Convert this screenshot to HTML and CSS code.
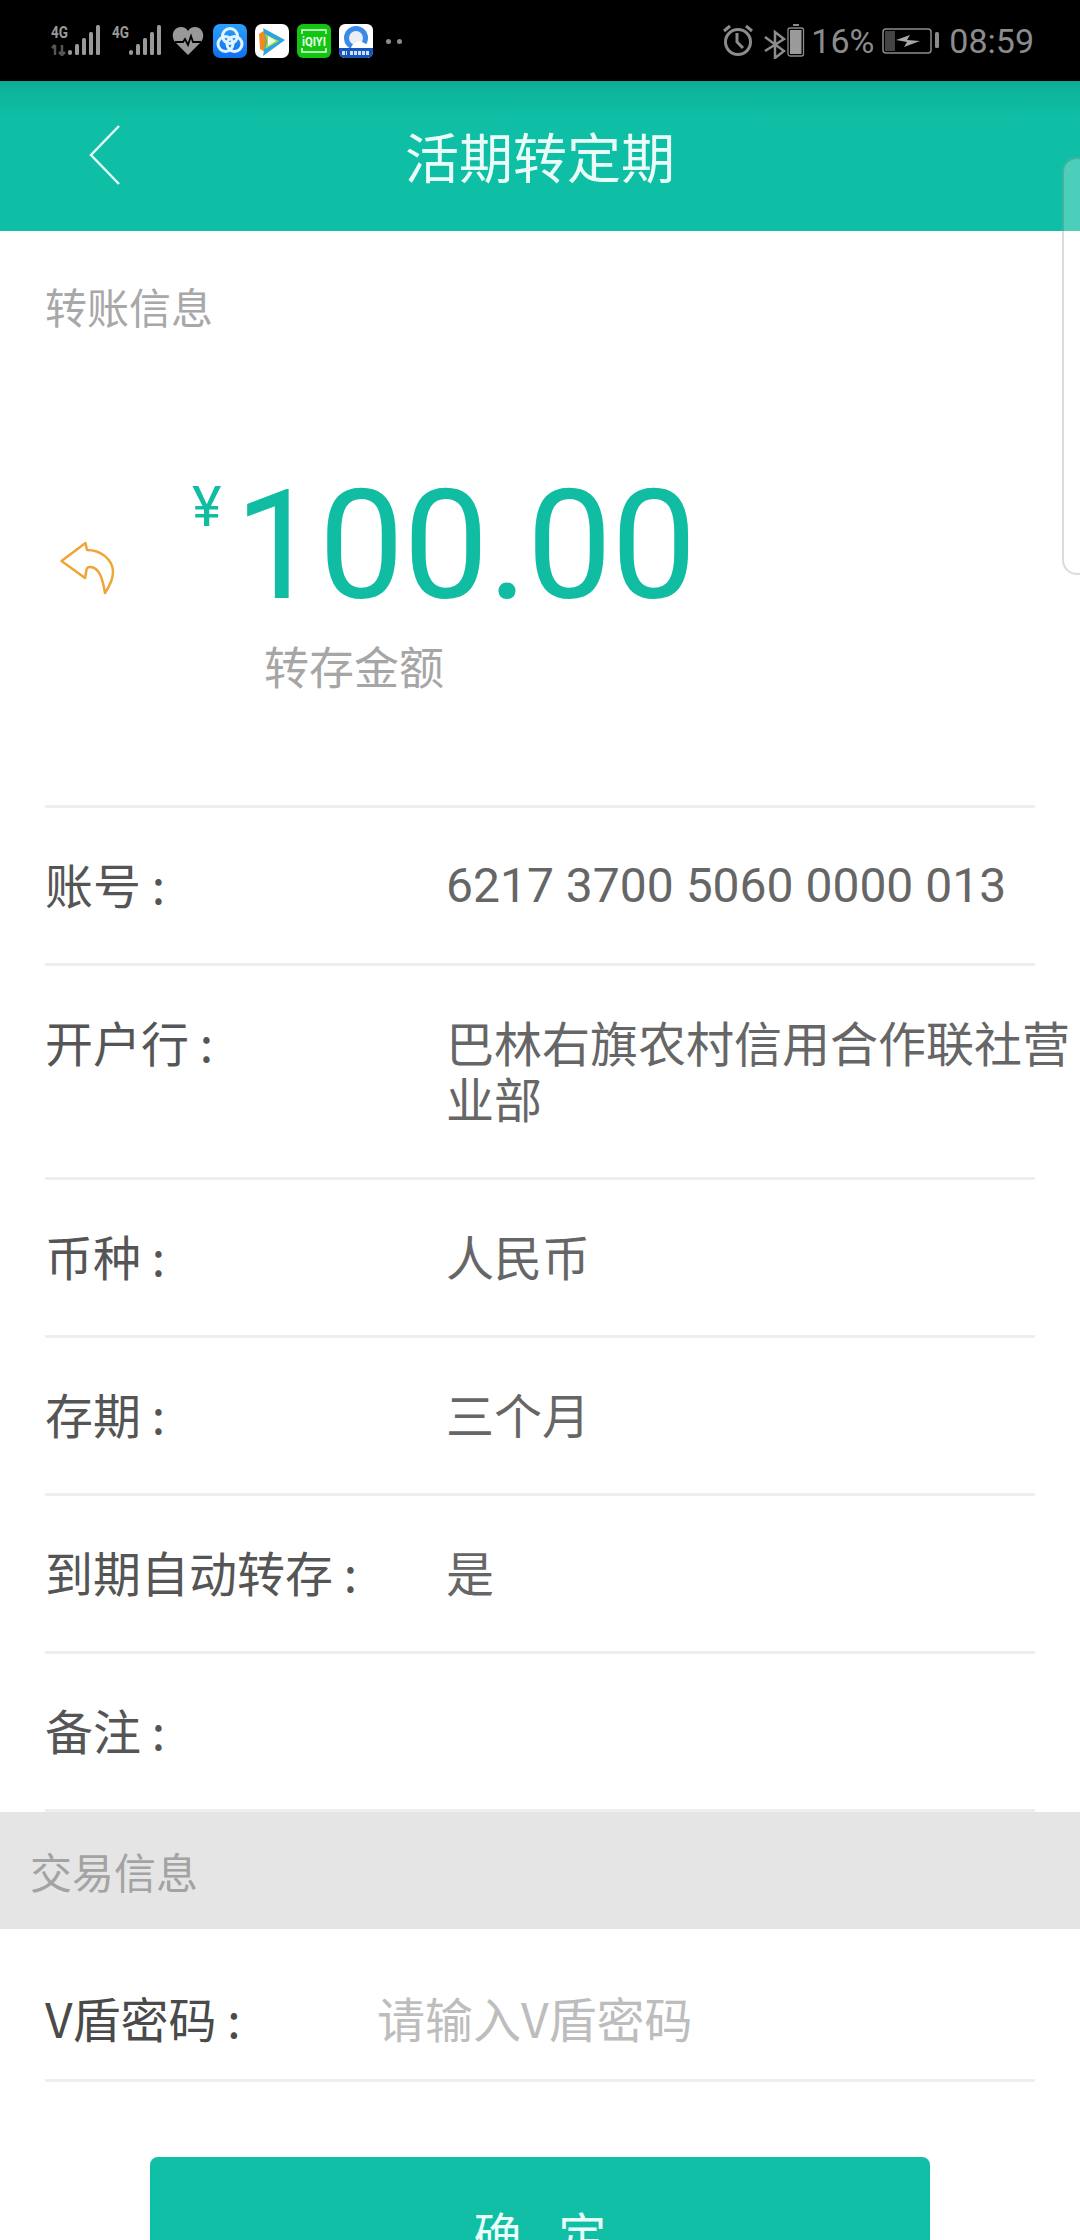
FILE: index.html
```html
<!DOCTYPE html>
<html lang="zh-CN">
<head>
<meta charset="utf-8">
<title>活期转定期</title>
<link rel="stylesheet" href="styles.css">
</head>
<body>
<div class="screen">
  <div class="status">
    <div class="status-left">
      <svg class="sig" width="50" height="36" viewBox="0 -4 50 36">
        <text x="1" y="14" class="sig-t" textLength="17" lengthAdjust="spacingAndGlyphs">4G</text>
        <path d="M5 21v10M2 24l3-3M12 21v10M9 28l3 3 3-3" stroke="#555" stroke-width="2.500" fill="none"/>
        <rect x="18" y="26" width="4" height="5" rx="2" fill="#999"/><rect x="25" y="20" width="4" height="11" rx="1.500" fill="#999"/><rect x="32" y="14" width="4" height="17" rx="1.500" fill="#999"/><rect x="39" y="8" width="4" height="23" rx="1.500" fill="#999"/><rect x="46" y="1" width="4" height="30" rx="1.500" fill="#999"/>
      </svg>
      <svg class="sig" width="50" height="36" viewBox="0 -4 50 36">
        <text x="1" y="14" class="sig-t" textLength="17" lengthAdjust="spacingAndGlyphs">4G</text>
        <rect x="18" y="26" width="4" height="5" rx="2" fill="#999"/><rect x="25" y="20" width="4" height="11" rx="1.500" fill="#999"/><rect x="32" y="14" width="4" height="17" rx="1.500" fill="#999"/><rect x="39" y="8" width="4" height="23" rx="1.500" fill="#999"/><rect x="46" y="1" width="4" height="30" rx="1.500" fill="#999"/>
      </svg>
      <svg class="heart" width="32" height="28" viewBox="0 0 32 28">
        <path d="M16 28 3 15C-2 8 2 0 9 0c3 0 5.500 1.500 7 4 1.500-2.500 4-4 7-4 7 0 11 8 6 15z" fill="#999"/>
        <path d="M3 15h8l2-3 3 6 3-9 2 6h8" stroke="#000" stroke-width="1.800" fill="none"/>
      </svg>
      <svg class="app" width="34" height="34" viewBox="0 0 34 34">
        <defs><linearGradient id="blueg" x1="0" y1="0" x2="0" y2="1"><stop offset="0" stop-color="#2aa0fa"/><stop offset="1" stop-color="#0f6fee"/></linearGradient></defs>
        <rect width="34" height="34" rx="7" fill="url(#blueg)"/>
        <g fill="none" stroke="#e4f4ff" stroke-width="3"><circle cx="17" cy="12" r="7.500"/><circle cx="12.500" cy="20" r="7.500"/><circle cx="21.500" cy="20" r="7.500"/></g>
      </svg>
      <svg class="app" width="34" height="34" viewBox="0 0 34 34">
        <rect width="34" height="34" rx="7" fill="#fff"/>
        <path d="M4 10 10 6 16 17 10 28 5 25z" fill="#f08a1d"/>
        <path d="M8 4 30 16 8 32l3-16z" fill="#2aa4e2"/>
        <path d="M10 10 24 17 10 25l2-8z" fill="#a6d846"/>
        <path d="M13 12 21 17 13 22z" fill="#f4ffe8"/>
      </svg>
      <svg class="app" width="34" height="34" viewBox="0 0 34 34">
        <rect width="34" height="34" rx="6" fill="#11c511"/>
        <path d="M5 10V6h24v4M5 24v4h24v-4" stroke="#e6ffe6" stroke-width="1.500" fill="none"/>
        <text x="5" y="22" class="iq" textLength="24" lengthAdjust="spacingAndGlyphs">iQIYI</text>
      </svg>
      <svg class="app" width="34" height="34" viewBox="0 0 34 34">
        <rect width="34" height="34" rx="6" fill="#fff"/>
        <circle cx="17" cy="14" r="9.500" fill="#e9eef4" stroke="#3a8ae8" stroke-width="5"/>
        <path d="M12 24c2-6 8-8 13-5 3 1 6 3 7 5z" fill="#fff"/>
        <path d="M0 24h34v4a6 6 0 0 1-6 6H6a6 6 0 0 1-6-6z" fill="#1656bc"/>
        <path d="M3 29h5M11 29h20" stroke="#cfe0ff" stroke-width="4" stroke-dasharray="3 1"/>
      </svg>
      <span class="dots"><i class="dot"></i><i class="dot"></i></span>
    </div>
    <div class="status-right">
      <svg width="32" height="32" viewBox="0 0 32 32" class="alarm">
        <circle cx="16" cy="18" r="12.500" fill="none" stroke="#8c8c8c" stroke-width="3"/>
        <path d="M15 9v9l6 6M2 7l6-5M30 7l-6-5" fill="none" stroke="#8c8c8c" stroke-width="3"/>
      </svg>
      <svg width="22" height="32" viewBox="0 0 22 32" class="bt">
        <path d="M1 10 20 24 11 31V5l9 7L1 24" fill="none" stroke="#8c8c8c" stroke-width="2.500"/>
      </svg>
      <svg width="18" height="33" viewBox="0 0 18 33" class="bat">
        <rect x="6" y="0" width="6" height="2" fill="#8c8c8c"/>
        <rect x="1" y="4" width="15.500" height="28" rx="2" fill="none" stroke="#8c8c8c" stroke-width="1.300"/>
        <rect x="3" y="6" width="11.500" height="24" fill="#9a9a9a"/>
      </svg>
      <span class="st-text pct">16%</span>
      <svg width="58" height="26" viewBox="0 0 58 26" class="chg">
        <rect x="1" y="1" width="48" height="24" rx="3" fill="none" stroke="#8c8c8c" stroke-width="1.500"/>
        <rect x="3" y="3" width="10" height="20" fill="#444"/>
        <path d="M14 12 28 7l-3 5 13 1-16 6 3-5z" fill="#a8a8a8"/>
        <rect x="53" y="4" width="4" height="16" rx="1.500" fill="#8c8c8c"/>
      </svg>
      <span class="st-text time">08:59</span>
    </div>
  </div>

  <header class="nav">
    <svg class="back" width="32" height="64" viewBox="0 0 32 64">
      <path d="M30 3 2 32l28 29" fill="none" stroke="#e6fbf7" stroke-width="2.500"/>
    </svg>
    <h1 class="title">活期转定期</h1>
  </header>

  <main class="content">
    <div class="section-label">转账信息</div>

    <section class="hero">
      <svg class="reply" width="56" height="56" viewBox="0 0 56 56">
        <path d="M1.500 20 25.500 2 27 9C40 9 53 18 53 31 53 38 49 46 45 52 43 40 40 26 30 26 28 26 27 27 26.700 28L25 37Z" fill="none" stroke="#efa535" stroke-width="2.500" stroke-linejoin="round"/>
      </svg>
      <div class="amount-col">
        <div class="amount"><span class="yen">¥</span><span class="num">100.00</span></div>
        <div class="amount-cap">转存金额</div>
      </div>
    </section>

    <div class="rows">
      <div class="row"><div class="k">账号 :</div><div class="v num-v">6217 3700 5060 0000 013</div></div>
      <div class="row"><div class="k">开户行 :</div><div class="v">巴林右旗农村信用合作联社营业部</div></div>
      <div class="row"><div class="k">币种 :</div><div class="v">人民币</div></div>
      <div class="row"><div class="k">存期 :</div><div class="v">三个月</div></div>
      <div class="row"><div class="k">到期自动转存 :</div><div class="v">是</div></div>
      <div class="row"><div class="k">备注 :</div><div class="v"></div></div>
    </div>

    <div class="band">交易信息</div>

    <div class="row pw-row">
      <div class="k pw-k">V盾密码 :</div>
      <div class="ph">请输入V盾密码</div>
    </div>

    <div class="btn-wrap"><button class="btn">确 定</button></div>
  </main>

  <div class="scroll-tab"></div>
</div>
</body>
</html>
```

FILE: styles.css
```css
* { box-sizing: border-box; }
html, body { margin: 0; padding: 0; }
body {
  width: 1080px;
  height: 2240px;
  overflow: hidden;
  background: #fff;
  font-family: "Roboto", "Noto Sans CJK SC", sans-serif;
  color: #555;
}
.screen { position: relative; width: 1080px; height: 2240px; overflow: hidden; }

.status {
  height: 81px;
  background: #000;
  display: flex;
  justify-content: space-between;
  align-items: flex-start;
  padding: 24px 46px 0 50px;
}
.status-left { display: flex; align-items: flex-start; gap: 8px; }
.status-right { display: flex; align-items: flex-start; }
.sig { display: block; margin: -4px 3px 0 0; }
.sig-t { font: 700 17px "Roboto", sans-serif; fill: #999; }
.heart { margin: 3px 1px 0 0; }
.iq { font: 700 12px "Roboto", sans-serif; fill: #eaffea; }
.dots { display: flex; gap: 6px; margin: 15px 0 0 5px; }
.dot { width: 5px; height: 5px; border-radius: 50%; background: #8c8c8c; display: block; }
.alarm { margin-right: 10px; }
.bt { margin: 3px 1px 0 0; }
.bat { margin-right: 6px; }
.st-text { font-size: 34px; line-height: 34px; color: #8c8c8c; }
.pct { margin-right: 10px; width: 61px; white-space: nowrap; }
.chg { margin: 4px 9px 0 0; }
.time { white-space: nowrap; }

.nav {
  height: 150px;
  background: linear-gradient(#0fa994 0, #0fb69e 12px, #0fbfa5 40px);
  position: relative;
  display: flex;
  align-items: center;
  justify-content: center;
}
.back { position: absolute; left: 89px; top: 42px; }
.title {
  margin: 0;
  font: 400 54px/64px "Noto Sans CJK SC", sans-serif;
  color: #eafcf8;
}

.section-label {
  padding: 50px 45px 0;
  font: 400 42px/50px "Noto Sans CJK SC", sans-serif;
  color: #a8a8a8;
}

.hero {
  height: 474px;
  display: flex;
  align-items: flex-start;
  padding: 0 0 0 60px;
}
.reply { margin-top: 210px; flex: none; }
.amount-col { margin-left: 76px; padding-top: 138px; }
.amount { display: flex; align-items: flex-start; height: 170px; }
.yen {
  font: 400 56px/46px "Roboto", sans-serif;
  color: #10bda3;
  margin: 15px 13px 0 0;
}
.num {
  font: 400 152px/170px "Roboto", sans-serif;
  color: #10bda3;
  margin-top: -8px;
  letter-spacing: -1px;
}
.amount-cap {
  margin: 0 0 0 72px;
  font: 400 45px/54px "Noto Sans CJK SC", sans-serif;
  color: #a6a6a6;
}

.rows { border-top: 3px solid #eee; margin: 0 45px; }
.row {
  display: grid;
  grid-template-columns: 401px 634px;
  border-bottom: 3px solid #eee;
  padding: 47px 0 52px;
  font: 400 48px/56px "Noto Sans CJK SC", sans-serif;
  min-height: 158px;
}
.k { color: #555; white-space: nowrap; }
.v { color: #666; }
.num-v { font-family: "Roboto", sans-serif; white-space: nowrap; margin: 3px 0 -3px; }

.band {
  height: 117px;
  background: #e5e5e5;
  padding-left: 30px;
  font: 400 42px/117px "Noto Sans CJK SC", sans-serif;
  color: #a3a3a3;
}

.pw-row {
  margin: 0 45px;
  grid-template-columns: 332px 1fr;
  min-height: 153px;
  padding: 60px 0 0;
}
.pw-k { color: #4a4a4a; }
.ph { color: #bdbdbd; white-space: nowrap; }

.btn-wrap { padding: 75px 150px 0; }
.btn {
  display: block;
  width: 780px;
  height: 150px;
  border: 0;
  border-radius: 8px;
  background: #10bfa6;
  color: #e9fdf9;
  font: 400 48px/150px "Noto Sans CJK SC", sans-serif;
  word-spacing: 26px;
  padding: 0;
}

.scroll-tab {
  position: absolute;
  left: 1062px;
  top: 157px;
  width: 30px;
  height: 418px;
  border: 2px solid rgba(0, 0, 0, 0.14);
  border-radius: 16px;
  background: rgba(255, 255, 255, 0.25);
}
```
